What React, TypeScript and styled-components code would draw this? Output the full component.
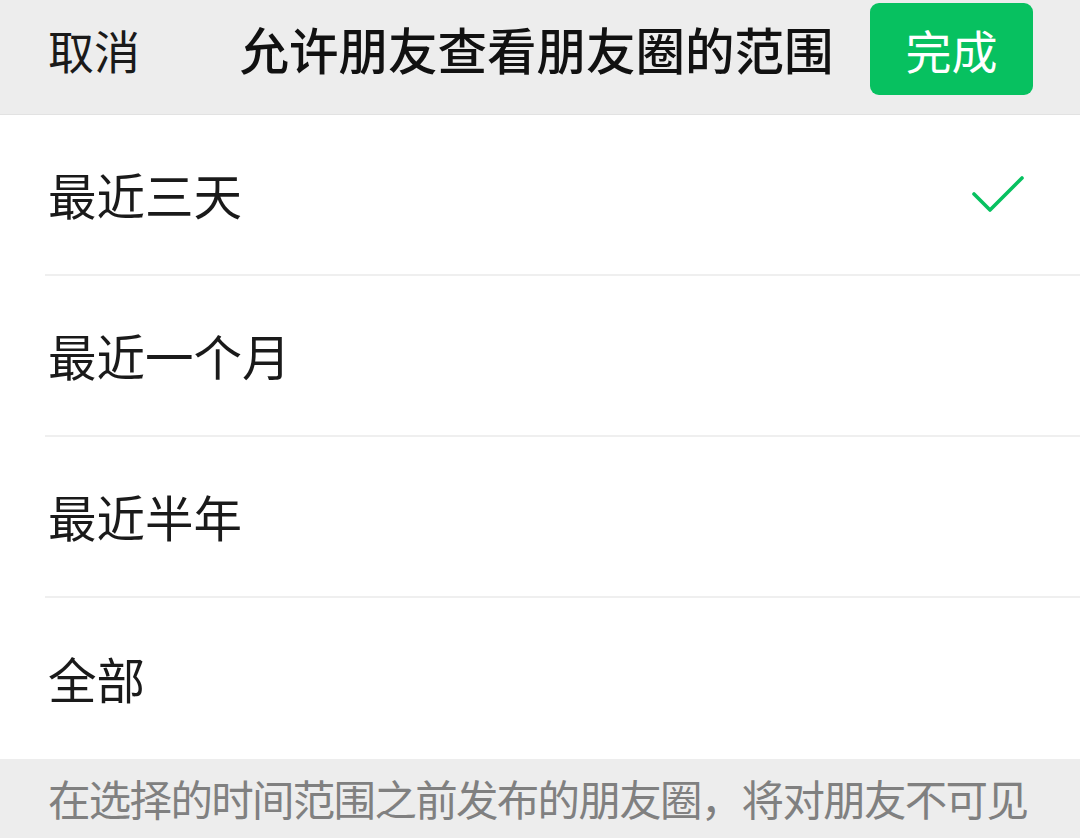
import React from "react";
import styled, { createGlobalStyle } from "styled-components";

const Global = createGlobalStyle`
  html, body { margin: 0; padding: 0; background: #ededed; }
  body { font-family: "Noto Sans CJK SC", "Noto Sans", sans-serif; }
  * { box-sizing: border-box; }
`;

const Page = styled.div`
  width: 1080px;
  height: 838px;
  display: flex;
  flex-direction: column;
  background: #ededed;
  overflow: hidden;
`;

const Header = styled.header`
  height: 115px;
  padding: 3px 47px 20px 48px;
  display: grid;
  grid-template-columns: 1fr auto 1fr;
  align-items: center;
  background: #ededed;
  border-bottom: 1px solid #e2e2e2;
`;

const Cancel = styled.span`
  font-size: 46px;
  line-height: 1;
  color: #1a1a1a;
`;

const Title = styled.h1`
  margin: 0;
  font-size: 49.5px;
  font-weight: 500;
  line-height: 1;
  color: #111111;
  transform: translateX(-4px);
`;

const DoneButton = styled.button`
  justify-self: end;
  width: 163px;
  height: 92px;
  border: none;
  border-radius: 9px;
  background: #07c160;
  color: #ffffff;
  font-family: inherit;
  font-size: 46px;
  line-height: 1;
  padding: 0;
`;

const List = styled.div`
  background: #ffffff;
`;

const Row = styled.div`
  padding-left: 45px;
`;

const RowInner = styled.div<{ $last?: boolean }>`
  height: 161px;
  display: flex;
  align-items: center;
  justify-content: space-between;
  padding: 0 55px 0 3px;
  border-bottom: ${(p) => (p.$last ? "none" : "2px solid #efefef")};
`;

const Label = styled.span`
  font-size: 48.5px;
  line-height: 1;
  color: #1a1a1a;
`;

const Footer = styled.div`
  flex: 1;
  display: flex;
  align-items: center;
  padding-left: 48px;
  background: #ededed;
`;

const Note = styled.span`
  font-size: 42.5px;
  letter-spacing: -1.7px;
  line-height: 1;
  color: #808080;
  white-space: nowrap;
`;

const Check = () => (
  <svg width="54" height="40" viewBox="0 0 54 40" fill="none">
    <polyline
      points="3,19 19,35 51,3"
      stroke="#07c160"
      strokeWidth="3.6"
      strokeLinecap="round"
      strokeLinejoin="round"
    />
  </svg>
);

const options = ["最近三天", "最近一个月", "最近半年", "全部"];

export default function App() {
  const selected = 0;
  return (
    <>
      <Global />
      <Page>
        <Header>
          <Cancel>取消</Cancel>
          <Title>允许朋友查看朋友圈的范围</Title>
          <DoneButton>完成</DoneButton>
        </Header>
        <List>
          {options.map((o, i) => (
            <Row key={o}>
              <RowInner $last={i === options.length - 1}>
                <Label>{o}</Label>
                {i === selected && <Check />}
              </RowInner>
            </Row>
          ))}
        </List>
        <Footer>
          <Note>在选择的时间范围之前发布的朋友圈，将对朋友不可见</Note>
        </Footer>
      </Page>
    </>
  );
}
